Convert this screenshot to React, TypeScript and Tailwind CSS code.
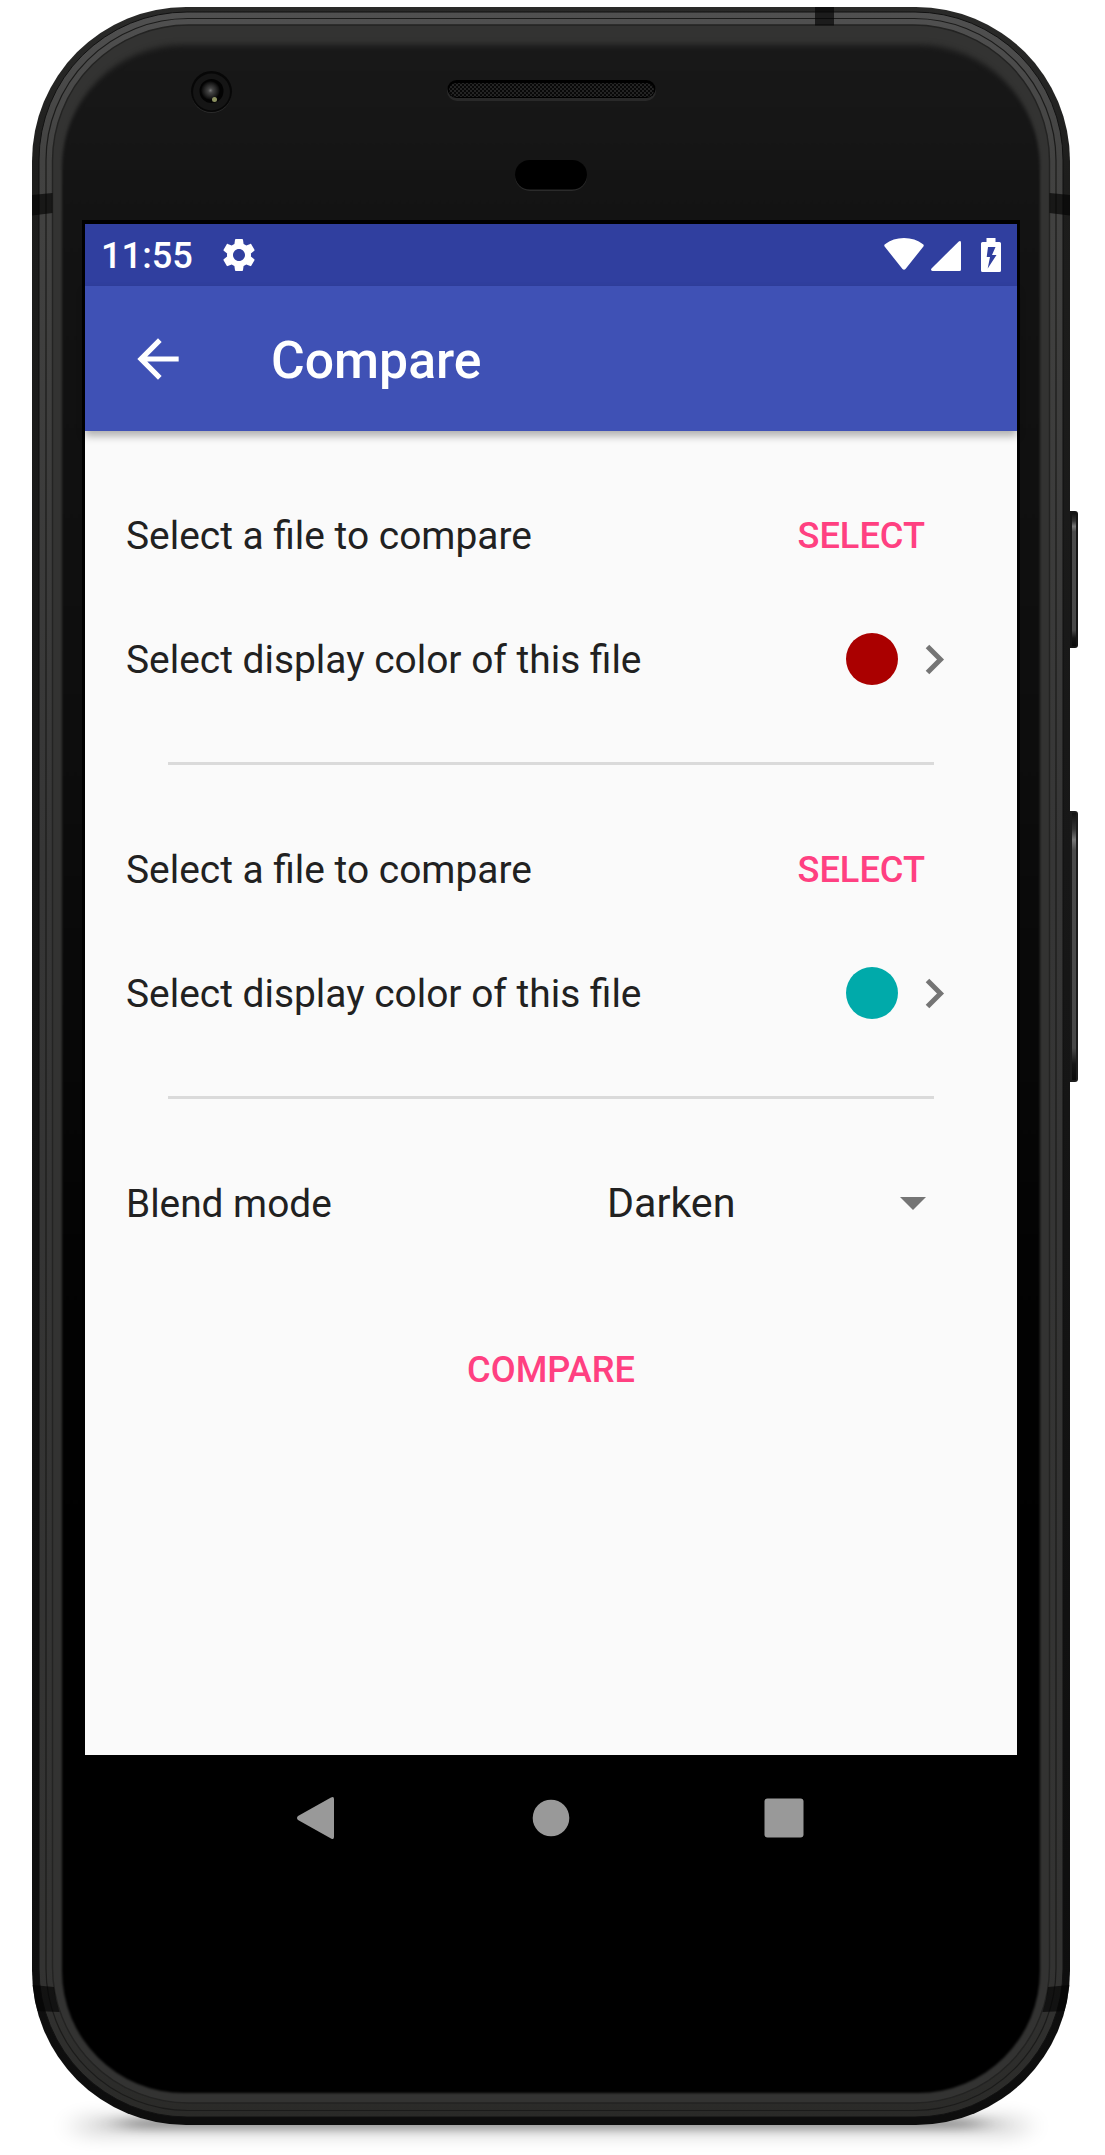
import React from "react";

function Bezel() {
  return (
    <svg className="absolute inset-0" width="1105" height="2155" viewBox="0 0 1105 2155">
      <defs>
        <linearGradient id="edge" x1="0" y1="0" x2="0" y2="1">
          <stop offset="0" stopColor="#2a2a29" />
          <stop offset="0.08" stopColor="#1d1d1c" />
          <stop offset="0.4" stopColor="#171717" />
          <stop offset="1" stopColor="#0d0d0d" />
        </linearGradient>
        <linearGradient id="metal" x1="0" y1="0" x2="0" y2="1">
          <stop offset="0" stopColor="#505050" />
          <stop offset="0.07" stopColor="#424241" />
          <stop offset="0.4" stopColor="#363636" />
          <stop offset="0.93" stopColor="#333332" />
          <stop offset="1" stopColor="#2a2a28" />
        </linearGradient>
        <linearGradient id="face" x1="0" y1="0" x2="0" y2="1">
          <stop offset="0" stopColor="#181818" />
          <stop offset="0.09" stopColor="#131313" />
          <stop offset="0.35" stopColor="#0d0d0d" />
          <stop offset="0.6" stopColor="#030303" />
          <stop offset="0.75" stopColor="#000" />
        </linearGradient>
        <linearGradient id="key" x1="0" y1="0" x2="0" y2="1">
          <stop offset="0" stopColor="#111" />
          <stop offset="0.06" stopColor="#333" />
          <stop offset="0.1" stopColor="#777" />
          <stop offset="0.14" stopColor="#4a4a4a" />
          <stop offset="0.88" stopColor="#484848" />
          <stop offset="0.94" stopColor="#151515" />
          <stop offset="1" stopColor="#0a0a0a" />
        </linearGradient>
        <radialGradient id="lens">
          <stop offset="0" stopColor="#777" />
          <stop offset="0.25" stopColor="#444" />
          <stop offset="0.7" stopColor="#202020" />
          <stop offset="1" stopColor="#050505" />
        </radialGradient>
        <pattern id="mesh" width="4" height="4" patternUnits="userSpaceOnUse">
          <rect width="4" height="4" fill="#080808" />
          <rect width="2" height="2" fill="#242424" />
          <rect x="2" y="2" width="2" height="2" fill="#242424" />
        </pattern>
        <filter id="soft" x="-5%" y="-5%" width="110%" height="110%" colorInterpolationFilters="sRGB">
          <feGaussianBlur stdDeviation="1.2" />
        </filter>
        <filter id="softTop" x="-5%" y="-5%" width="110%" height="110%" colorInterpolationFilters="sRGB">
          <feGaussianBlur stdDeviation="1.4 3" />
        </filter>
        <filter id="ground" x="-20%" y="-200%" width="140%" height="500%" colorInterpolationFilters="sRGB">
          <feGaussianBlur stdDeviation="14 8" />
        </filter>
        <filter id="groundNear" x="-20%" y="-300%" width="140%" height="700%" colorInterpolationFilters="sRGB">
          <feGaussianBlur stdDeviation="16 5" />
        </filter>
        <clipPath id="body">
          <rect x="32" y="7" width="1038" height="2118" rx="154" />
        </clipPath>
        <clipPath id="upper">
          <rect x="0" y="0" width="1105" height="170" />
        </clipPath>
        <clipPath id="lower">
          <rect x="0" y="170" width="1105" height="1985" />
        </clipPath>
      </defs>

      <rect x="76" y="2114" width="950" height="24" rx="12" fill="#000" opacity="0.12" filter="url(#ground)" />
      <rect x="120" y="2118" width="862" height="11" rx="5" fill="#000" opacity="0.36" filter="url(#groundNear)" />

      <g>
        <rect x="1066" y="511" width="12" height="137" rx="3" fill="#151515" />
        <rect x="1072" y="513" width="4" height="133" fill="url(#key)" />
        <rect x="1066" y="811" width="12" height="271" rx="3" fill="#1c1c1c" />
        <rect x="1072" y="813" width="4" height="267" fill="url(#key)" />
      </g>

      <rect x="32" y="7" width="1038" height="2118" rx="154" fill="url(#edge)" />
      <rect x="39" y="12" width="1024" height="2105" rx="148" fill="url(#metal)" stroke="#111" strokeWidth="1" />
      <rect x="46" y="18.5" width="1010" height="2092" rx="142" fill="none" stroke="#1b1b1a" strokeWidth="1.2" />
      <rect x="52.5" y="25" width="997" height="2078" rx="136" fill="#333332" stroke="#232322" strokeWidth="1.4" />
      <g clipPath="url(#lower)">
        <rect x="62" y="46" width="978" height="2047" rx="122" fill="url(#face)" filter="url(#soft)" />
      </g>
      <g clipPath="url(#upper)">
        <rect x="62" y="45" width="978" height="2048" rx="122" fill="url(#face)" filter="url(#softTop)" />
      </g>
      <g clipPath="url(#body)" fill="#050505" fillOpacity="0.68">
        <rect x="815" y="7" width="19" height="18.5" />
        <path d="M32 195 L52.5 193 V213 L32 215.5Z" />
        <path d="M1070 195 L1049.5 193 V213 L1070 215.5Z" />
        <path d="M32 1985 L54 1987 Q55.5 2000 59.5 2012 L36 2011Z" />
        <path d="M1070 1985 L1048 1987 Q1046.5 2000 1042.5 2012 L1066 2011Z" />
      </g>

      <circle cx="211.5" cy="93" r="20" fill="#2b2b2b" />
      <circle cx="211.5" cy="91.5" r="20.5" fill="#070707" />
      <circle cx="211.5" cy="92" r="18.5" fill="#151515" />
      <circle cx="211.5" cy="91" r="12" fill="#030303" />
      <circle cx="210.5" cy="90.5" r="9.5" fill="url(#lens)" />
      <circle cx="214.5" cy="99.5" r="2.5" fill="#8c9160" />

      <rect x="447" y="81" width="209" height="20" rx="10" fill="#292929" />
      <rect x="447.5" y="80" width="208" height="18" rx="9" fill="#000" />
      <rect x="449" y="83" width="205" height="14" rx="7" fill="url(#mesh)" />
      <rect x="515" y="161" width="72" height="30" rx="15" fill="#2b2b2b" />
      <rect x="515" y="160" width="72" height="29.5" rx="14.75" fill="#000" />
      <rect x="82" y="220" width="938" height="1660" fill="#000" />
    </svg>
  );
}

function StatusBar() {
  return (
    <div className="flex h-[62px] items-center bg-[#303f9f] pl-[16px] pr-[16px] text-white">
      <span className="w-[93px] whitespace-nowrap pt-[3px] text-[36.2px] font-medium leading-none">11:55</span>
      <svg className="ml-[25px] size-[40px]" viewBox="0 0 24 24" fill="currentColor">
        <path d="M19.14 12.94c.04-.3.06-.61.06-.94 0-.32-.02-.64-.07-.94l2.03-1.58c.18-.14.23-.41.12-.61l-1.92-3.32c-.12-.22-.37-.29-.59-.22l-2.39.96c-.5-.38-1.03-.7-1.62-.94l-.36-2.54c-.04-.24-.24-.41-.48-.41h-3.84c-.24 0-.43.17-.47.41l-.36 2.54c-.59.24-1.13.57-1.62.94l-2.39-.96c-.22-.08-.47 0-.59.22L2.74 8.87c-.12.21-.08.47.12.61l2.03 1.58c-.05.3-.09.63-.09.94s.02.64.07.94l-2.03 1.58c-.18.14-.23.41-.12.61l1.92 3.32c.12.22.37.29.59.22l2.39-.96c.5.38 1.03.7 1.62.94l.36 2.54c.05.24.24.41.48.41h3.84c.24 0 .44-.17.47-.41l.36-2.54c.59-.24 1.13-.56 1.62-.94l2.39.96c.22.08.47 0 .59-.22l1.92-3.32c.12-.22.07-.47-.12-.61l-2.01-1.58zM12 15.6c-1.98 0-3.6-1.62-3.6-3.6s1.62-3.6 3.6-3.6 3.6 1.62 3.6 3.6-1.62 3.6-3.6 3.6z" />
      </svg>
      <div className="ml-auto flex h-[34px] items-end">
        <svg className="mb-[2px] mr-[7px] h-[32px] w-[40px]" viewBox="0 0 40 32" fill="currentColor">
          <path d="M1 9Q-.5 7.5 1 6.3Q9 0 20 0T39 6.3Q40.5 7.5 39 9L21.5 31Q20 32.5 18.5 31Z" />
        </svg>
        <svg className="mb-px mr-[20px] h-[30px] w-[30px]" viewBox="0 0 30 30" fill="currentColor">
          <path d="M27.5.7Q29.7-.8 30 1.5V28.5Q30 30 28.5 30H1.5Q-.8 29.7.5 27.5Z" />
        </svg>
        <svg className="h-[34px] w-[20px]" viewBox="0 0 20 34" fill="currentColor">
          <path fillRule="evenodd" d="M5.5 0H14.5V4H18.5Q20 4 20 5.5V32.5Q20 34 18.5 34H1.5Q0 34 0 32.5V5.5Q0 4 1.5 4H5.5ZM7 9L5.7 19H9L6.7 30.5L15.5 17H11L14.5 9Z" />
        </svg>
      </div>
    </div>
  );
}

function AppBar() {
  return (
    <div className="relative z-10 flex h-[145px] items-center bg-[#3f51b5] pl-[42px] text-white shadow-[0_5px_8px_rgba(0,0,0,0.3)]">
      <svg className="size-[62px]" viewBox="0 0 24 24" fill="currentColor">
        <path d="M20 11H7.83l5.59-5.59L12 4l-8 8 8 8 1.41-1.41L7.83 13H20v-2z" />
      </svg>
      <h1 className="ml-[82px] pt-[5px] whitespace-nowrap text-[51.7px] font-medium leading-none">Compare</h1>
    </div>
  );
}

function FileSection({ dot }: { dot: string }) {
  return (
    <section className="h-[334px]">
      <div className="flex h-[124px] items-center justify-between pr-[92px]">
        <span className="whitespace-nowrap text-[38.9px]">Select a file to compare</span>
        <button className="text-[36.2px] font-medium text-[#ff4081]">SELECT</button>
      </div>
      <div className="flex h-[124px] items-center pr-[72px]">
        <span className="whitespace-nowrap text-[38.9px]">Select display color of this file</span>
        <span className={"mb-[2px] ml-auto size-[52px] rounded-full " + dot} />
        <svg className="mb-[2px] ml-[27px] h-[31px] w-[20px]" viewBox="0 0 20 31">
          <path d="M2.5 2.5L15.5 15.5L2.5 28.5" fill="none" stroke="#757575" strokeWidth="5" />
        </svg>
      </div>
      <div className="ml-[42px] mt-[40px] mr-[83px] h-[3px] bg-[#dadada]" />
    </section>
  );
}

export default function App() {
  return (
    <main className="relative flex h-[2155px] w-[1105px] flex-col overflow-hidden bg-white pl-[85px] pt-[224px] font-['Roboto',sans-serif]">
      <Bezel />
      <div className="relative flex w-[932px] flex-col">
        <StatusBar />
        <AppBar />
        <div className="flex h-[1324px] flex-col bg-[#fafafa] pl-[41px] pt-[43px] text-[#212121]">
          <FileSection dot="bg-[#aa0000]" />
          <FileSection dot="bg-[#00aaaa]" />
          <div className="flex h-[124px] items-center text-[38.8px]">
            <span className="w-[481px]">Blend mode</span>
            <span className="text-[41.2px]">Darken</span>
            <svg className="mb-[2px] ml-auto mr-[91px] h-[13px] w-[26px]" viewBox="0 0 26 13">
              <path d="M0 0H26L13 13Z" fill="#757575" />
            </svg>
          </div>
          <button className="mt-[42px] h-[124px] w-[850px] text-center text-[36.2px] font-medium text-[#ff4081]">COMPARE</button>
        </div>
        <nav className="relative h-[125px] w-full bg-black">
          <svg className="h-[125px] w-full" viewBox="85 1755 932 125" fill="#999">
            <path d="M298 1816L331 1797.5Q334 1796 334 1799V1837Q334 1840 331 1838.5L298 1820Q296 1818 298 1816Z" />
            <circle cx="551" cy="1818" r="18.3" />
            <rect x="764.5" y="1798.5" width="39" height="39" rx="3" />
          </svg>
        </nav>
      </div>
    </main>
  );
}
